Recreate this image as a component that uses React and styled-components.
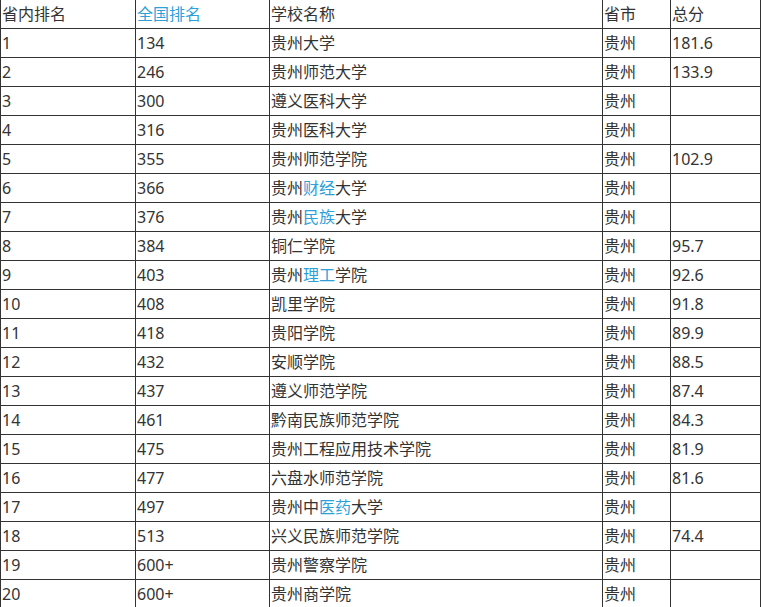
import React from 'react';
import styled, {createGlobalStyle} from 'styled-components';

const rows = [
  ['1', '134', ['贵州大学'], '181.6'],
  ['2', '246', ['贵州师范大学'], '133.9'],
  ['3', '300', ['遵义医科大学'], ''],
  ['4', '316', ['贵州医科大学'], ''],
  ['5', '355', ['贵州师范学院'], '102.9'],
  ['6', '366', ['贵州', {link: '财经'}, '大学'], ''],
  ['7', '376', ['贵州', {link: '民族'}, '大学'], ''],
  ['8', '384', ['铜仁学院'], '95.7'],
  ['9', '403', ['贵州', {link: '理工'}, '学院'], '92.6'],
  ['10', '408', ['凯里学院'], '91.8'],
  ['11', '418', ['贵阳学院'], '89.9'],
  ['12', '432', ['安顺学院'], '88.5'],
  ['13', '437', ['遵义师范学院'], '87.4'],
  ['14', '461', ['黔南民族师范学院'], '84.3'],
  ['15', '475', ['贵州工程应用技术学院'], '81.9'],
  ['16', '477', ['六盘水师范学院'], '81.6'],
  ['17', '497', ['贵州中', {link: '医药'}, '大学'], ''],
  ['18', '513', ['兴义民族师范学院'], '74.4'],
  ['19', '600+', ['贵州警察学院'], ''],
  ['20', '600+', ['贵州商学院'], ''],
];

const GlobalStyle = createGlobalStyle`
  body {
    margin: 0;
    background: #fff;
  }
`;

const App = () => (
  <>
    <GlobalStyle />
    <RankTable>
      <colgroup>
        <col style={{width: 135}} />
        <col style={{width: 134}} />
        <col style={{width: 333}} />
        <col style={{width: 68}} />
        <col style={{width: 90}} />
      </colgroup>
      <thead>
        <tr>
          <Cell $head>省内排名</Cell>
          <Cell $head><Link>全国排名</Link></Cell>
          <Cell $head>学校名称</Cell>
          <Cell $head>省市</Cell>
          <Cell $head>总分</Cell>
        </tr>
      </thead>
      <tbody>
        {rows.map(([local, national, name, score]) => (
          <tr key={local}>
            <Cell>{local}</Cell>
            <Cell>{national}</Cell>
            <Cell>
              {name.map((part, i) =>
                typeof part === 'string' ? part : <Link key={i}>{part.link}</Link>
              )}
            </Cell>
            <Cell>贵州</Cell>
            <Cell>{score}</Cell>
          </tr>
        ))}
      </tbody>
    </RankTable>
  </>
);

const RankTable = styled.table`
  border-collapse: collapse;
  table-layout: fixed;
  width: 761px;
  font-family: "Noto Sans", "Noto Sans CJK SC", sans-serif;
  font-size: 16px;
  color: #333;
`;

const Cell = styled.td`
  border: 1px solid #333;
  border-top: ${p => (p.$head ? 'none' : '1px solid #333')};
  height: 28px;
  padding: 0 0 0 1px;
  line-height: 28px;
  white-space: nowrap;
  overflow: hidden;
  text-align: left;
  vertical-align: middle;
`;

const Link = styled.span`
  color: #2d9fd9;
`;

export default App;
